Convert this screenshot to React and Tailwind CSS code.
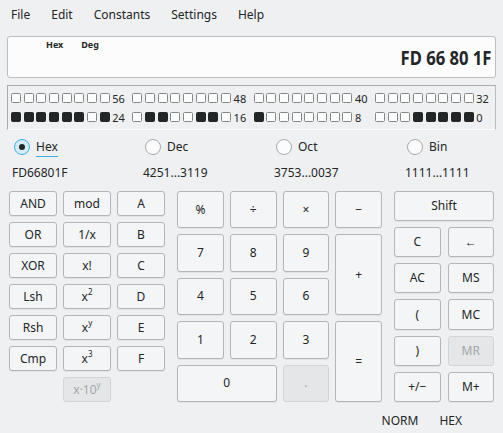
import React from "react";

const Sq = ({ on }) => (
  <span
    className={
      on
        ? "block w-[10px] h-[10px] flex-none rounded-[1.5px] border-[1.5px] border-[#232627] bg-[#232627]"
        : "block w-[10px] h-[10px] flex-none rounded-[1.5px] border-[1.5px] border-[#85888b] bg-[#fcfcfc]"
    }
  />
);

const Group = ({ bits, label }) => (
  <div className="flex items-center w-[121.3px] flex-none h-[10px]">
    <div className="flex gap-[2.7px]">
      {bits.split("").map((b, i) => (
        <Sq key={i} on={b === "1"} />
      ))}
    </div>
    <span className="ml-[2.5px] text-[11px] leading-none">{label}</span>
  </div>
);

const Btn = ({ children, className = "", disabled }) => (
  <div
    className={
      (disabled
        ? "flex items-center justify-center rounded-[3px] border border-[#d2d4d6] bg-[#e4e6e8] text-[#a3a6a9] "
        : "flex items-center justify-center rounded-[3px] border border-[#b3b5b7] bg-[#f4f5f6] text-[#232627] shadow-[0_1px_0_rgba(0,0,0,0.05)] ") +
      className
    }
  >
    {children}
  </div>
);

const Sup = ({ children }) => (
  <span className="relative -top-[5px] text-[8px] leading-none">{children}</span>
);

const Radio = ({ checked, label }) => (
  <div className="flex items-center h-[20px]">
    {checked ? (
      <span className="flex items-center justify-center w-[16px] h-[16px] rounded-full border border-[#3daee9] bg-[#d4ecf9]">
        <span className="w-[6px] h-[6px] rounded-full bg-[#232627]" />
      </span>
    ) : (
      <span className="w-[16px] h-[16px] rounded-full border border-[#a8aaac] bg-[#fcfcfc]" />
    )}
    <span className="ml-[6px] relative leading-[20px]">
      {label}
      {checked && (
        <span className="absolute left-0 right-0 bottom-[0px] h-[1.5px] bg-[#3daee9]" />
      )}
    </span>
  </div>
);

export default function App() {
  return (
    <div className="w-[503px] h-[433px] bg-[#eff0f1] text-[#232627] font-['Noto_Sans',sans-serif] text-[12px] flex flex-col overflow-hidden">
      {/* Menu */}
      <div className="h-[30px] flex items-center gap-[21px] pl-[11px]">
        <span>File</span>
        <span>Edit</span>
        <span>Constants</span>
        <span>Settings</span>
        <span>Help</span>
      </div>

      {/* Display */}
      <div className="mx-[7px] mt-[6px] h-[42px] rounded-[3px] border border-[#bcbebf] bg-[#fcfcfc] flex flex-col">
        <div className="flex gap-[18px] pl-[38px] pt-[3px] text-[9px] font-bold leading-[9px]">
          <span>Hex</span>
          <span>Deg</span>
        </div>
        <div className="flex justify-end pr-[4px] -mt-[1px]">
          <span className="inline-block text-[20px] font-bold leading-none origin-right scale-x-[0.83] whitespace-nowrap">
            FD 66 80 1F
          </span>
        </div>
      </div>

      {/* Bits */}
      <div className="mx-[7px] mt-[7px] h-[45px] border-t border-l border-r border-b border-t-[#a9abad] border-l-[#a9abad] border-r-[#b9bbbd] border-b-[#fcfcfc] pl-[3px] pt-[7px] flex flex-col gap-[9px]">
        <div className="flex">
          <Group bits="00000000" label="56" />
          <Group bits="00000000" label="48" />
          <Group bits="00000000" label="40" />
          <Group bits="00000000" label="32" />
        </div>
        <div className="flex">
          <Group bits="11111101" label="24" />
          <Group bits="01100110" label="16" />
          <Group bits="10000000" label="8" />
          <Group bits="00011111" label="0" />
        </div>
      </div>

      {/* Radios */}
      <div className="mt-[7px] pl-[14px] grid grid-cols-[131px_131px_131px_1fr]">
        <Radio checked label="Hex" />
        <Radio label="Dec" />
        <Radio label="Oct" />
        <Radio label="Bin" />
      </div>
      <div className="mt-[6px] pl-[12px] grid grid-cols-[131px_131px_131px_1fr] leading-[20px]">
        <span>FD66801F</span>
        <span>4251...3119</span>
        <span>3753...0037</span>
        <span>1111...1111</span>
      </div>

      {/* Buttons */}
      <div className="mt-[8px] pl-[9px] flex gap-[12px] h-[211px]">
        <div className="w-[156px] grid grid-cols-3 grid-rows-7 gap-[6px]">
          <Btn>AND</Btn>
          <Btn>mod</Btn>
          <Btn>A</Btn>
          <Btn>OR</Btn>
          <Btn>1/x</Btn>
          <Btn>B</Btn>
          <Btn>XOR</Btn>
          <Btn>x!</Btn>
          <Btn>C</Btn>
          <Btn>Lsh</Btn>
          <Btn>
            x<Sup>2</Sup>
          </Btn>
          <Btn>D</Btn>
          <Btn>Rsh</Btn>
          <Btn>
            x<Sup>y</Sup>
          </Btn>
          <Btn>E</Btn>
          <Btn>Cmp</Btn>
          <Btn>
            x<Sup>3</Sup>
          </Btn>
          <Btn>F</Btn>
          <Btn disabled className="col-start-2">
            x·10<Sup>y</Sup>
          </Btn>
        </div>

        <div className="w-[205px] grid grid-cols-4 grid-rows-5 gap-[6px]">
          <Btn>%</Btn>
          <Btn>÷</Btn>
          <Btn>×</Btn>
          <Btn>−</Btn>
          <Btn>7</Btn>
          <Btn>8</Btn>
          <Btn>9</Btn>
          <Btn className="row-span-2">+</Btn>
          <Btn>4</Btn>
          <Btn>5</Btn>
          <Btn>6</Btn>
          <Btn>1</Btn>
          <Btn>2</Btn>
          <Btn>3</Btn>
          <Btn className="row-span-2">=</Btn>
          <Btn className="col-span-2">0</Btn>
          <Btn disabled>.</Btn>
        </div>

        <div className="w-[100px] grid grid-cols-2 grid-rows-6 gap-x-[7px] gap-y-[6px]">
          <Btn className="col-span-2">Shift</Btn>
          <Btn>C</Btn>
          <Btn>←</Btn>
          <Btn>AC</Btn>
          <Btn>MS</Btn>
          <Btn>(</Btn>
          <Btn>MC</Btn>
          <Btn>)</Btn>
          <Btn disabled>MR</Btn>
          <Btn>+/−</Btn>
          <Btn>M+</Btn>
        </div>
      </div>

      {/* Status */}
      <div className="mt-[9px] flex justify-end gap-[21px] pr-[41px] leading-[20px]">
        <span>NORM</span>
        <span>HEX</span>
      </div>
    </div>
  );
}
